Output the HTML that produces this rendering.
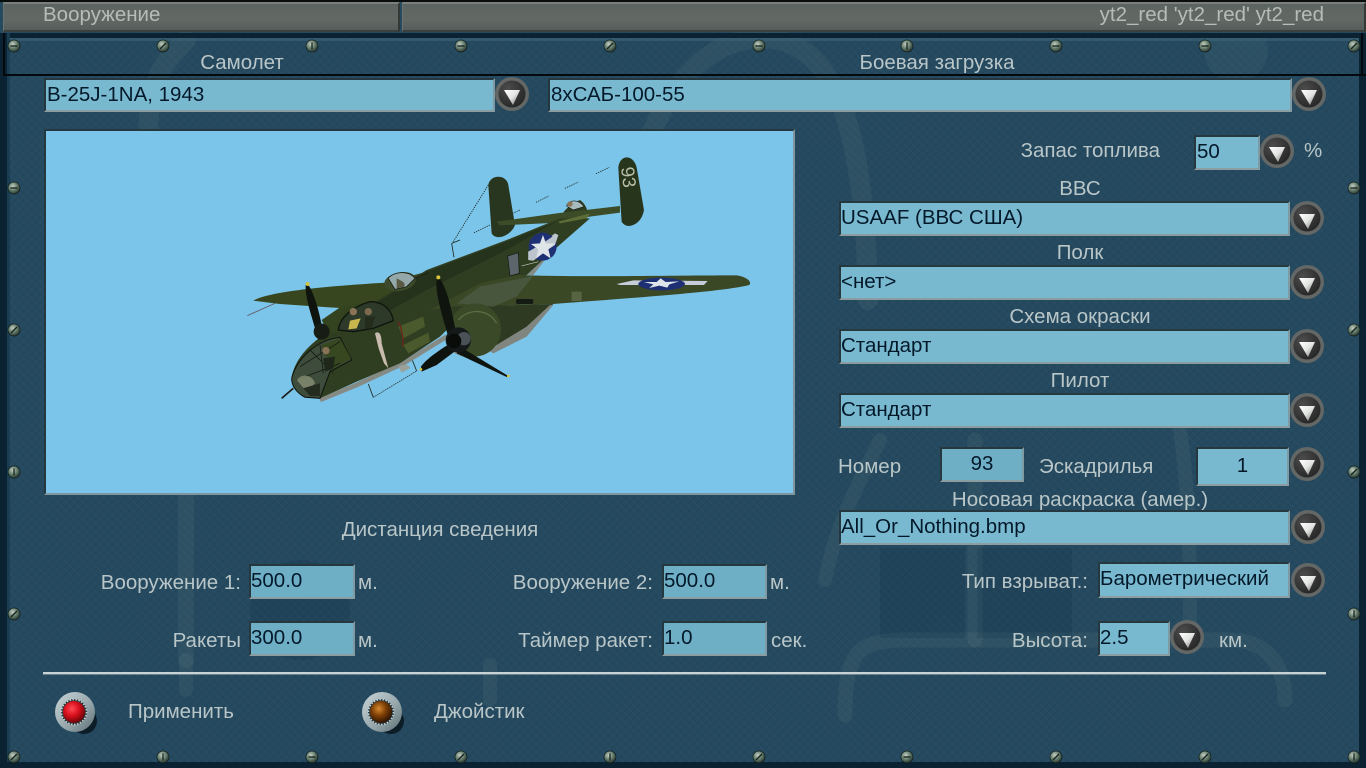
<!DOCTYPE html>
<html lang="ru"><head><meta charset="utf-8"><title>Вооружение</title>
<style>
html,body{margin:0;padding:0;width:1366px;height:768px;overflow:hidden;background:#24485f}
body{position:relative;font:20.5px/20px "Liberation Sans","Noto Sans CJK SC",sans-serif;color:#b9c6c8}
#bg{position:absolute;left:0;top:0;width:1366px;height:768px;background:
repeating-linear-gradient(45deg,rgba(255,255,255,.022) 0 1px,transparent 1px 6px),
repeating-linear-gradient(-45deg,rgba(0,0,0,.05) 0 1px,transparent 1px 6px),
#25495f}
svg{position:absolute;left:0;top:0}
.t{position:absolute;white-space:nowrap;height:20px;margin-top:2px}
.r{text-align:right}.c{text-align:center}
.f{position:absolute;box-sizing:border-box;background:#79b9d0;border:2px solid;border-color:#26383f #7f9aa2 #8b9da1 #26383f;color:#03192a;padding-left:0;line-height:29px;white-space:nowrap;overflow:hidden}
.bar{position:absolute;top:2px;height:30px;box-sizing:border-box;background:linear-gradient(#5c6461,#626965 60%,#565d5a);border-top:2px solid #7a807b;border-bottom:2px solid #3a403e;border-left:1px solid #6c726d;border-right:2px solid #333937}
</style></head><body>
<div id="bg"></div>
<svg width="1366" height="768" viewBox="0 0 1366 768">
<defs>
<radialGradient id="sc" cx=".4" cy=".35" r=".7"><stop offset="0" stop-color="#c3d0c4"/><stop offset=".55" stop-color="#5f7767"/><stop offset="1" stop-color="#202c28"/></radialGradient>
<linearGradient id="tri" x1="0" y1="0" x2="1" y2="1"><stop offset="0" stop-color="#fff"/><stop offset=".5" stop-color="#e2e4e2"/><stop offset="1" stop-color="#6d6d6d"/></linearGradient>
<radialGradient id="dk" cx=".35" cy=".3" r=".8"><stop offset="0" stop-color="#4c4c4c"/><stop offset="1" stop-color="#242424"/></radialGradient>
<radialGradient id="red" cx=".4" cy=".35" r=".65"><stop offset="0" stop-color="#ff4a55"/><stop offset=".5" stop-color="#d8101c"/><stop offset="1" stop-color="#6d0508"/></radialGradient>
<radialGradient id="amb" cx=".4" cy=".35" r=".65"><stop offset="0" stop-color="#d58a30"/><stop offset=".5" stop-color="#7e3f06"/><stop offset="1" stop-color="#2f1602"/></radialGradient>
<linearGradient id="met" x1="0" y1="0" x2="1" y2="1"><stop offset="0" stop-color="#c9d5d8"/><stop offset=".6" stop-color="#93a4a9"/><stop offset="1" stop-color="#5c6c72"/></linearGradient>
<g id="btn"><circle r="17" fill="#636765"/><circle r="13.5" fill="url(#dk)"/><path d="M-8-4L8-4L1 11Z" fill="url(#tri)"/></g>
<g id="s1"><circle r="6" fill="url(#sc)" stroke="#111d1c" stroke-width=".7"/><path d="M-3 3L3-3" stroke="#16201c" stroke-width="1.3"/></g>
<g id="s2"><circle r="6" fill="url(#sc)" stroke="#111d1c" stroke-width=".7"/><path d="M-3.5 0H3.5" stroke="#16201c" stroke-width="1.3"/></g>
<g id="s3"><circle r="6" fill="url(#sc)" stroke="#111d1c" stroke-width=".7"/><path d="M0-3.5V3.5" stroke="#16201c" stroke-width="1.3"/></g>
<g id="lamp"><circle cx="9" cy="9" r="13" fill="#0a1822" opacity=".9"/><circle r="20" fill="url(#met)"/><circle cx="-1" r="13" fill="#28383e"/><circle cx="-1" r="12.5" fill="none" stroke="#cdd5d6" stroke-width="1.5" stroke-dasharray="1.5 1.5"/></g>
</defs>
<!-- ghost artwork -->
<g fill="none" stroke="#7d9c96" stroke-opacity=".11" stroke-linecap="round">
<path d="M625 330C615 130 690 40 760 38C840 38 865 140 868 300" stroke-width="20"/>
<path d="M186 40C170 60 140 70 150 180" stroke-width="20"/>
<path d="M186 495V660" stroke-width="16"/>
<path d="M975 440V640" stroke-width="15"/>
<path d="M845 715C845 650 860 642 900 640H1230C1270 640 1285 670 1285 700" stroke-width="15"/>
<path d="M880 440C850 500 835 530 825 580" stroke-width="14"/>
<path d="M1180 430C1190 500 1190 560 1190 630" stroke-width="14"/>
<path d="M186 660V690" stroke-width="14"/>
<path d="M490 665V700" stroke-width="14"/>
</g>
<g fill="#0d2c42" fill-opacity=".18">
<rect x="880" y="548" width="85" height="90"/><rect x="977" y="548" width="95" height="90"/>
<circle cx="300" cy="610" r="50"/>
<circle cx="1236" cy="50" r="32" fill="#8ba" fill-opacity=".07"/>
</g>
<!-- panel edges -->
<rect x="0" y="33" width="1366" height="5" fill="#0a2231"/>
<rect x="0" y="38" width="1366" height="3" fill="#3d6478" opacity=".6"/>
<rect x="0" y="33" width="7" height="735" fill="#0a2231"/>
<rect x="7" y="33" width="3" height="735" fill="#1a3d52"/>
<rect x="1359" y="33" width="7" height="735" fill="#0a2231"/>
<rect x="0" y="762" width="1366" height="6" fill="#0a2231"/>
<rect x="0" y="0" width="1366" height="2" fill="#0a0d0d"/>
<path d="M4 33V75H1366" fill="none" stroke="#03090c" stroke-width="2"/>
<rect x="1361" y="33" width="2" height="42" fill="#03090c"/>
<rect x="43" y="672" width="1283" height="2.4" fill="#c6d2d3"/>
<!-- screws -->
<use href="#s2" x="14" y="46"/><use href="#s1" x="163" y="46"/><use href="#s3" x="312" y="46"/><use href="#s2" x="461" y="46"/><use href="#s1" x="610" y="46"/><use href="#s2" x="759" y="46"/><use href="#s3" x="907" y="46"/><use href="#s2" x="1056" y="46"/><use href="#s2" x="1205" y="46"/><use href="#s1" x="1354" y="46"/>
<use href="#s1" x="14" y="757"/><use href="#s3" x="163" y="757"/><use href="#s2" x="312" y="757"/><use href="#s1" x="461" y="757"/><use href="#s3" x="610" y="757"/><use href="#s1" x="759" y="757"/><use href="#s2" x="907" y="757"/><use href="#s1" x="1056" y="757"/><use href="#s1" x="1205" y="757"/><use href="#s3" x="1354" y="757"/>
<use href="#s2" x="14" y="188"/><use href="#s1" x="14" y="330"/><use href="#s3" x="14" y="472"/><use href="#s1" x="14" y="614"/>
<use href="#s2" x="1354" y="188"/><use href="#s1" x="1354" y="330"/><use href="#s1" x="1354" y="472"/><use href="#s3" x="1354" y="614"/>
</svg>
<div class="bar" style="left:3px;width:397px"></div>
<div class="bar" style="left:402px;width:964px"></div>
<div class="t" style="left:43px;top:3px;color:#b6bdb8;margin-top:2px">Вооружение</div>
<div class="t r" style="right:42px;top:3px;color:#b6bdb8">yt2_red 'yt2_red' yt2_red</div>
<div class="t c" style="left:142px;width:200px;top:51px">Самолет</div>
<div class="t c" style="left:787px;width:300px;top:51px">Боевая загрузка</div>
<div class="f" style="left:44px;top:78px;width:451px;height:34px;padding-left:1px">B-25J-1NA, 1943</div>
<div class="f" style="left:548px;top:78px;width:744px;height:34px;padding-left:1px">8xСАБ-100-55</div>
<div style="position:absolute;left:44px;top:129px;width:751px;height:366px;box-sizing:border-box;background:#7bc4ea;border:2px solid;border-color:#26383f #7f969e #7f969e #26383f"></div>
<svg width="1366" height="768" viewBox="0 0 1366 768" style="pointer-events:none">
<g transform="translate(240 150) scale(.3333)">
<g fill="none" stroke="#1c2418" stroke-width="2.4" stroke-dasharray="4 3">
<path d="M745 105L640 275"/><path d="M635 280L660 270M635 280L642 322" stroke-dasharray="none"/>
<path d="M702 248L750 225M785 205L840 180M888 157L927 138M975 115L1015 96M1068 71L1108 52"/>
<path d="M400 742L530 663"/><path d="M385 702L400 742M530 663L515 625" stroke-dasharray="none"/>
</g>
<path d="M22 497L105 460" stroke="#667" stroke-width="3"/>
<path d="M40 452C80 430 200 412 440 398L560 365L400 480L270 472L120 462Z" fill="#37461f"/>
<path d="M955 225C960 190 985 165 1020 150C1035 160 1040 175 1045 190L1000 215Z" fill="#2e3c20"/>
<path d="M745 105C750 72 800 72 805 105L825 225C815 255 770 275 755 250Z" fill="#28361f"/>
<path d="M1135 52C1140 12 1180 12 1190 52L1212 180C1205 225 1160 242 1145 215Z" fill="#27351d"/>
<text transform="translate(1143 53) rotate(83)" font-family="Liberation Sans,sans-serif" font-size="56" fill="#b8bfa6">93</text>
<path d="M770 215L950 190L1140 168V188L1050 200L960 218L780 226Z" fill="#3d4c28"/>
<!-- lower belly strip -->
<path d="M240 750L350 705L490 640L620 560" fill="none" stroke="#858a84" stroke-width="14"/>
<path d="M860 375L1045 205L930 310L880 375Z" fill="#858a84"/>
<path d="M155 680C170 610 230 565 300 520L560 360L800 270L960 205L1050 205L930 310L860 375L640 520L600 560L480 640L350 695L240 745L190 740C165 725 155 700 155 680Z" fill="#2f3e21"/>
<path d="M300 525L560 365L800 275L950 215L800 300L560 420L400 510Z" fill="#26331c"/>
<path d="M830 375C1000 382 1300 376 1490 376C1520 380 1537 395 1528 405C1450 425 1200 442 940 462L800 466L640 470L570 480L720 400Z" fill="#3a4826"/>
<path d="M640 470L940 462L860 540L760 605L700 560Z" fill="#2f3a22"/>
<path d="M930 465L940 465L860 560L760 610L745 600L860 530Z" fill="#80857f"/>
<path d="M720 410L880 378L830 440L760 470L650 460Z" fill="#47563c"/>
<rect x="828" y="447" width="52" height="15" rx="6" fill="#141a14"/>
<rect x="995" y="425" width="30" height="28" fill="#6b7a5a" opacity=".6"/>
<path d="M625 590C650 630 720 635 770 590L760 560L640 560Z" fill="#8c908b"/>
<ellipse cx="705" cy="540" rx="78" ry="80" transform="rotate(25 705 540)" fill="#3a4927"/>
<path d="M655 510C690 470 750 480 770 520" fill="none" stroke="#6a7a50" stroke-width="4" opacity=".7"/>
<path d="M475 530L550 500L555 530L490 565ZM490 585L565 548L570 575L505 610Z" fill="#4a5a2d"/>
<path d="M245 510L300 472L390 455C430 465 455 490 460 515L300 545L265 550Z" fill="#33431f"/>
<path d="M295 540C300 500 340 470 390 455C430 455 455 480 460 512L400 535L340 545Z" fill="#2d3a2a" stroke="#0f140c" stroke-width="4"/>
<path d="M330 512L362 505L350 535L325 538Z" fill="#c9b64e"/><circle cx="340" cy="485" r="11" fill="#8b7456"/><circle cx="385" cy="485" r="11" fill="#7d6a4e"/>
<path d="M375 500L405 500L395 535L375 535Z" fill="#242c1c"/>
<path d="M155 685C170 625 230 570 300 562L335 630L270 665L240 745L195 742C165 725 155 705 155 685Z" fill="#3e4c3c" stroke="#0e130c" stroke-width="3"/>
<path d="M245 585L300 565L333 625L275 660Z" fill="#37471f"/>
<path d="M180 650L300 575M210 600L280 670M240 585L250 670M170 690L300 640" stroke="#161e14" stroke-width="2.5" fill="none"/>
<circle cx="258" cy="602" r="11" fill="#8a7256"/><path d="M250 625L285 620L280 655L255 665Z" fill="#1f261a"/>
<path d="M170 690C190 665 220 680 225 700L200 725Z" fill="#8d9478" opacity=".75"/>
<path d="M190 715L240 700L240 738L210 738Z" fill="#232c1e"/>
<path d="M125 745L160 715" stroke="#222" stroke-width="5"/>
<ellipse cx="480" cy="395" rx="48" ry="28" transform="rotate(-12 480 395)" fill="#3c4a2a"/>
<path d="M445 385C460 365 505 360 525 385L500 410L465 418Z" fill="#94a8aa" stroke="#10160e" stroke-width="2"/>
<path d="M470 385C490 395 500 400 490 412L470 415Z" fill="#5a5a44"/>
<path d="M525 385L565 368" stroke="#20261a" stroke-width="4"/>
<path d="M980 168C985 150 1015 145 1032 170L1000 180Z" fill="#a7bbbe" stroke="#1a2017" stroke-width="2"/><circle cx="990" cy="162" r="8" fill="#8b7456"/>
<path d="M955 215L1050 190L1040 205L960 220Z" fill="#5d6d38"/>
<path d="M803 318L835 308L838 370L810 378Z" fill="#5a666c" stroke="#11170e" stroke-width="2"/>
<path d="M845 348L895 335" stroke="#bfc9bd" stroke-width="2"/>
<path d="M865 305L885 295L945 250L955 255L945 285L880 332L865 330Z" fill="#bcc5ce"/>
<circle cx="908" cy="290" r="42" fill="#1f2f73"/>
<path d="M865 305L900 285L945 255L955 255L945 285L905 312L880 332L865 330Z" fill="#bcc5ce"/>
<path d="M909 255L918 280L945 280L925 297L932 325L909 310L888 326L895 298L873 282L900 280Z" fill="#dfe4e8"/>
<path d="M1130 402L1180 391L1403 393L1392 405L1140 405Z" fill="#c4cdd8"/>
<ellipse cx="1265" cy="402" rx="70" ry="19" fill="#1f2f73"/>
<path d="M1262 385L1277 396L1318 394L1288 403L1282 413L1258 407L1228 414L1240 403L1212 396L1250 396Z" fill="#dfe4ea"/>
<path d="M405 550C420 540 425 560 425 580L445 655L432 640L416 595Z" fill="#c9bcae"/>
<path d="M473 515C487 530 490 570 488 590" fill="none" stroke="#6d241a" stroke-width="4"/>
<path d="M475 650C490 640 510 645 510 655L485 668Z" fill="#9aa19a"/>
<path d="M203 402C225 430 245 510 250 560L235 570C220 510 195 450 197 405Z" fill="#10140e"/>
<ellipse cx="245" cy="545" rx="24" ry="24" fill="#171c14"/>
<circle cx="203" cy="402" r="6" fill="#d3c23d"/>
<path d="M595 382C625 410 640 510 650 555L625 560C605 490 585 430 590 385Z" fill="#10140e"/>
<circle cx="595" cy="382" r="6" fill="#d8c43a"/>
<path d="M630 580L650 600L590 645L545 665L543 650C560 625 600 600 630 580Z" fill="#0f130d"/>
<path d="M660 590L805 678L800 681L650 610Z" fill="#10140e"/>
<circle cx="805" cy="678" r="4" fill="#d6c338"/><circle cx="543" cy="658" r="4" fill="#d6c338"/>
<circle cx="655" cy="570" r="38" fill="#15191a"/><circle cx="672" cy="566" r="20" fill="#4a5258"/>
<circle cx="642" cy="573" r="22" fill="#0a0c0a"/>
</g>
<!-- buttons -->
<use href="#btn" x="512" y="94"/><use href="#btn" x="1309" y="94"/><use href="#btn" x="1277" y="151"/>
<use href="#btn" x="1307" y="218"/><use href="#btn" x="1307" y="282"/><use href="#btn" x="1307" y="346"/><use href="#btn" x="1307" y="410"/>
<use href="#btn" x="1307" y="464"/><use href="#btn" x="1308" y="527"/><use href="#btn" x="1308" y="580"/><use href="#btn" x="1187" y="637"/>
<!-- lamps -->
<g transform="translate(75 712)"><use href="#lamp"/><circle cx="-1" r="11" fill="url(#red)"/></g>
<g transform="translate(382 712)"><use href="#lamp"/><circle cx="-1" r="11" fill="url(#amb)"/></g>
</svg>
<div class="t r" style="left:960px;width:200px;top:139px">Запас топлива</div>
<div class="f" style="left:1194px;top:135px;width:66px;height:35px;padding-left:1px">50</div>
<div class="t" style="left:1304px;top:139px">%</div>
<div class="t c" style="left:980px;width:200px;top:177px">ВВС</div>
<div class="f" style="left:839px;top:201px;width:451px;height:35px">USAAF (ВВС США)</div>
<div class="t c" style="left:980px;width:200px;top:241px">Полк</div>
<div class="f" style="left:839px;top:265px;width:451px;height:35px">&lt;нет&gt;</div>
<div class="t c" style="left:980px;width:200px;top:305px">Схема окраски</div>
<div class="f" style="left:839px;top:329px;width:451px;height:35px">Стандарт</div>
<div class="t c" style="left:980px;width:200px;top:369px">Пилот</div>
<div class="f" style="left:839px;top:393px;width:451px;height:35px">Стандарт</div>
<div class="t" style="left:838px;top:455px">Номер</div>
<div class="f" style="left:940px;top:447px;width:84px;height:35px;text-align:center;background:#6fafc5">93</div>
<div class="t" style="left:1039px;top:455px">Эскадрилья</div>
<div class="f" style="left:1196px;top:447px;width:93px;height:39px;text-align:center;line-height:33px">1</div>
<div class="t c" style="left:880px;width:400px;top:488px">Носовая раскраска (амер.)</div>
<div class="f" style="left:839px;top:510px;width:451px;height:35px">All_Or_Nothing.bmp</div>
<div class="t r" style="left:888px;width:200px;top:570px">Тип взрыват.:</div>
<div class="f" style="left:1098px;top:562px;width:192px;height:36px">Барометрический</div>
<div class="t r" style="left:888px;width:200px;top:629px">Высота:</div>
<div class="f" style="left:1098px;top:621px;width:72px;height:35px">2.5</div>
<div class="t" style="left:1219px;top:629px">км.</div>
<div class="t c" style="left:290px;width:300px;top:518px">Дистанция сведения</div>
<div class="t r" style="left:41px;width:200px;top:571px">Вооружение 1:</div>
<div class="f" style="left:249px;top:564px;width:106px;height:35px;background:#6fafc5">500.0</div>
<div class="t" style="left:358px;top:571px">м.</div>
<div class="t r" style="left:41px;width:200px;top:629px">Ракеты</div>
<div class="f" style="left:249px;top:621px;width:106px;height:35px;background:#6fafc5">300.0</div>
<div class="t" style="left:358px;top:629px">м.</div>
<div class="t r" style="left:453px;width:200px;top:571px">Вооружение 2:</div>
<div class="f" style="left:662px;top:564px;width:105px;height:35px;background:#6fafc5">500.0</div>
<div class="t" style="left:770px;top:571px">м.</div>
<div class="t r" style="left:453px;width:200px;top:629px">Таймер ракет:</div>
<div class="f" style="left:662px;top:621px;width:105px;height:35px;background:#6fafc5">1.0</div>
<div class="t" style="left:771px;top:629px">сек.</div>
<div class="t" style="left:128px;top:700px">Применить</div>
<div class="t" style="left:434px;top:700px">Джойстик</div>
</body></html>
